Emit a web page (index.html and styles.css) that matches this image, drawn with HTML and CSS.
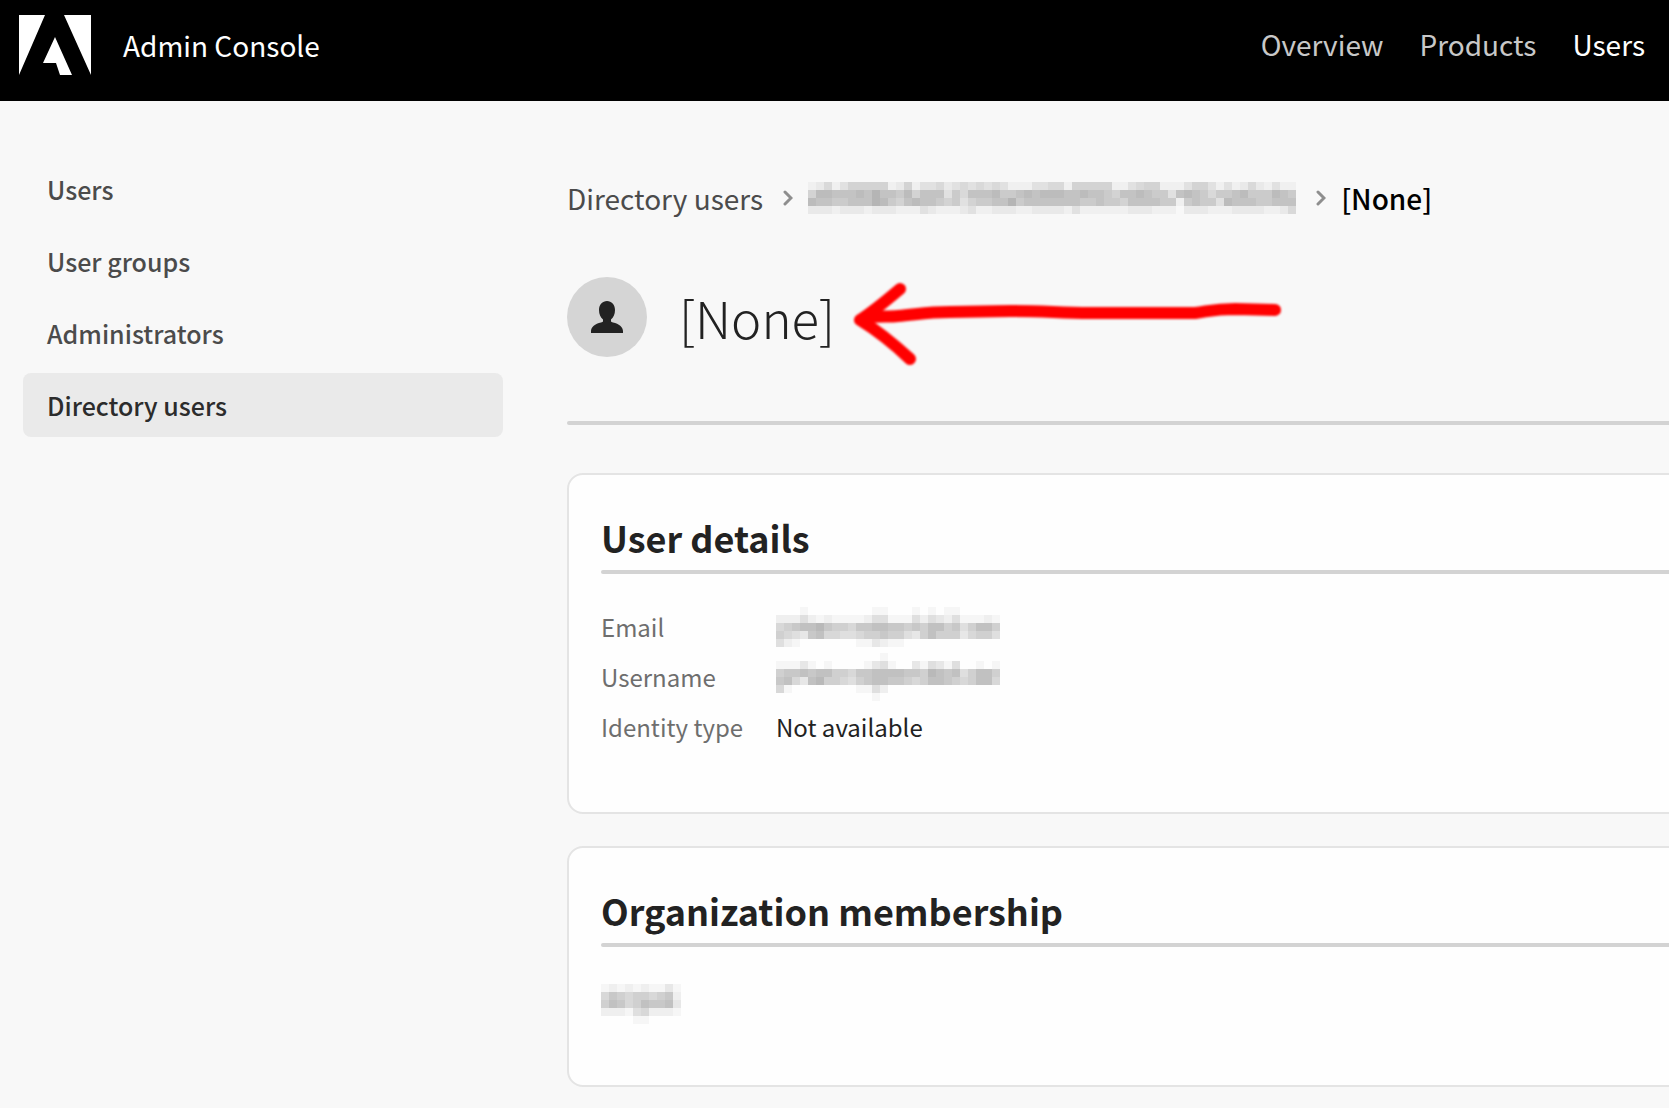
FILE: index.html
```html
<!DOCTYPE html>
<html lang="en">
<head>
  <meta charset="UTF-8" />
  <meta name="viewport" content="width=device-width, initial-scale=1.0"/>
  <title>Admin Console</title>
  <link rel="stylesheet" href="styles.css">
</head>
<body>
  <header class="topbar">
    <a class="brand" href="#">
      <svg class="logo" viewBox="0 0 72 60" aria-hidden="true">
        <path d="M0 0H26L0 60ZM45 0H72V60ZM36 22L53 60H41L37 48H24Z"/>
      </svg>
      <span>Admin Console</span>
    </a>
    <nav class="topnav">
      <a href="#">Overview</a>
      <a href="#">Products</a>
      <a class="active" href="#">Users</a>
    </nav>
  </header>

  <div class="layout">
    <nav class="sidebar">
      <a href="#">Users</a>
      <a href="#">User groups</a>
      <a href="#">Administrators</a>
      <a class="active" href="#">Directory users</a>
    </nav>

    <main class="content">
      <nav class="breadcrumbs">
        <a href="#">Directory users</a>
        <svg class="chevron" viewBox="0 0 10 16" aria-hidden="true"><path d="M2 2L8 8L2 14"/></svg>
        <svg class="mosaic" data-rows="1241355555125133423434343111334415555511345511135531312421311 5887778797768577736477786678788877877657787663787646678666876 8776677798657877656356677967777777667665777766167663877766777 2221222122211132111231122211222213111111222111022211122221124"></svg>
        <svg class="chevron" viewBox="0 0 10 16" aria-hidden="true"><path d="M2 2L8 8L2 14"/></svg>
        <strong>[None]</strong>
      </nav>

      <div class="user-header">
        <div class="avatar">
          <svg viewBox="0 0 32 32" aria-hidden="true">
            <path d="M16 0C20.500 0 24 3.500 24 9C24 13 22.500 16.500 20 18.500V20C20 21 21 21.300 22 21.400C28 22.500 32 26 32 30V32H0V30C0 26 4 22.500 10 21.400C11 21.300 12 21 12 20V18.500C9.500 16.500 8 13 8 9C8 3.500 11.500 0 16 0Z"/>
          </svg>
        </div>
        <h1>[None]</h1>
        <svg class="arrow" viewBox="0 0 460 110" aria-hidden="true">
          <path d="M60 19C47 30 34 41 20 50C38 61 54 74 70 89"/>
          <path d="M30 47C42 46 50 47 58 46C75 45 85 42 110 42L170 41C205 41 220 43 250 43L355 43C370 41 375 39 395 39L435 40"/>
        </svg>
      </div>

      <section class="card">
        <h2>User details</h2>
        <dl class="details">
          <dt>Email</dt>
          <dd><svg class="mosaic" data-rows="0001000000001100010101100000 2224212111124411142432411121 5678897665778877676886746886 6543785544566766436866635664 4210000000113211000000000000"></svg></dd>
          <dt>Username</dt>
          <dd><svg class="mosaic" data-rows="0000000000000100000000000000 1113101000013410031431400101 6778788665778888776987846886 7853896654678877656887656885 5100000000114200000000000000 0000000000001000000000000000"></svg></dd>
          <dt>Identity type</dt>
          <dd>Not available</dd>
        </dl>
      </section>

      <section class="card">
        <h2>Organization membership</h2>
        <p class="organization"><svg class="mosaic" data-rows="0000000000 1212121131 5765665672 6875687783 2221452221 0000110000"></svg></p>
      </section>
    </main>
  </div>

  <script src="script.js"></script>
</body>
</html>
```
FILE: styles.css
```css
* {
  box-sizing: border-box;
}

body {
  margin: 0;
  font-family: "Noto Sans CJK SC", "Noto Sans", sans-serif;
  background: #f8f8f8;
  color: #222;
  overflow-x: hidden;
}

a {
  color: inherit;
  text-decoration: none;
}

h1, h2, p, dl, dd {
  margin: 0;
}

.topbar {
  display: flex;
  justify-content: space-between;
  height: 101px;
  padding: 15px 24px 0 19px;
  background: #000;
  color: #fff;
  font-size: 28px;
  line-height: 60px;
}

.brand {
  display: flex;
  gap: 32px;
}

.logo {
  width: 72px;
  height: 60px;
  fill: #fff;
}

.topnav {
  display: flex;
  gap: 36px;
  color: #c8c8c8;
  line-height: 58px;
}

.topnav .active {
  color: #fff;
}

.layout {
  display: flex;
  gap: 64px;
  padding-left: 23px;
  overflow: hidden;
}

.sidebar {
  display: flex;
  flex-direction: column;
  flex: 0 0 480px;
  gap: 8px;
  padding-top: 56px;
}

.sidebar a {
  padding: 0 24px;
  border-radius: 8px;
  color: #4b4b4b;
  font-size: 25px;
  font-weight: 500;
  line-height: 64px;
}

.sidebar .active {
  background: #eaeaea;
  color: #2c2c2c;
}

/* the panels run on past the right edge of the window */
.content {
  flex: 1;
  min-width: 0;
  margin-right: -40px;
  padding: 77px 0 21px;
}

.breadcrumbs {
  display: flex;
  align-items: center;
  height: 40px;
  color: #4b4b4b;
  font-size: 28px;
  line-height: 40px;
}

.breadcrumbs strong {
  color: #000;
  font-weight: 500;
}

.chevron {
  width: 10px;
  height: 16px;
  margin: 0 15px 0 20px;
  fill: none;
  stroke: #8e8e8e;
  stroke-width: 3;
  stroke-linecap: round;
}

.mosaic {
  display: block;
  shape-rendering: crispEdges;
}

.user-header {
  position: relative;
  display: flex;
  align-items: center;
  gap: 32px;
  margin-top: 59px;
  padding-bottom: 64px;
}

.user-header::after {
  content: "";
  position: absolute;
  left: 0;
  right: 0;
  bottom: -4px;
  height: 4px;
  border-radius: 2px;
  background: #d3d3d3;
}

.avatar {
  display: flex;
  align-items: center;
  justify-content: center;
  width: 80px;
  height: 80px;
  border-radius: 50%;
  background: #d5d5d5;
}

.avatar svg {
  width: 32px;
  height: 32px;
  fill: #222;
}

h1 {
  font-size: 51px;
  font-weight: 300;
  line-height: 80px;
}

/* hand-drawn arrow pointing at the name */
.arrow {
  position: absolute;
  left: 273px;
  top: -7px;
  width: 460px;
  height: 110px;
  fill: none;
  stroke: #f00;
  stroke-width: 12;
  stroke-linecap: round;
  stroke-linejoin: round;
  filter: blur(1px);
}

.card {
  margin-top: 32px;
  padding: 38px 32px 60px;
  border: 2px solid #e4e4e4;
  border-radius: 16px;
  background: #fefefe;
}

.user-header + .card {
  margin-top: 52px;
}

h2 {
  font-size: 36px;
  font-weight: 700;
  line-height: 48px;
}

h2::after {
  content: "";
  display: block;
  height: 4px;
  margin-top: 9px;
  border-radius: 2px;
  background: #d3d3d3;
}

.details {
  display: grid;
  grid-template-columns: 175px 1fr;
  grid-auto-rows: 50px;
  align-items: center;
  margin-top: 28px;
  font-size: 24px;
  line-height: 50px;
}

.details dt {
  color: #6e6e6e;
}

.organization {
  display: flex;
  align-items: center;
  height: 50px;
  margin-top: 28px;
}
```
FILE: script.js
```javascript
const CELL = 8;

// each digit in data-rows is the darkness of one square
document.querySelectorAll(".mosaic").forEach(svg => {
  const rows = svg.dataset.rows.split(" ");
  svg.setAttribute("width", rows[0].length * CELL);
  svg.setAttribute("height", rows.length * CELL);

  rows.forEach((row, y) => {
    [...row].forEach((level, x) => {
      const rect = document.createElementNS("http://www.w3.org/2000/svg", "rect");
      rect.setAttribute("x", x * CELL);
      rect.setAttribute("y", y * CELL);
      rect.setAttribute("width", CELL);
      rect.setAttribute("height", CELL);
      rect.setAttribute("fill-opacity", level * 0.03);
      svg.appendChild(rect);
    });
  });
});
```
